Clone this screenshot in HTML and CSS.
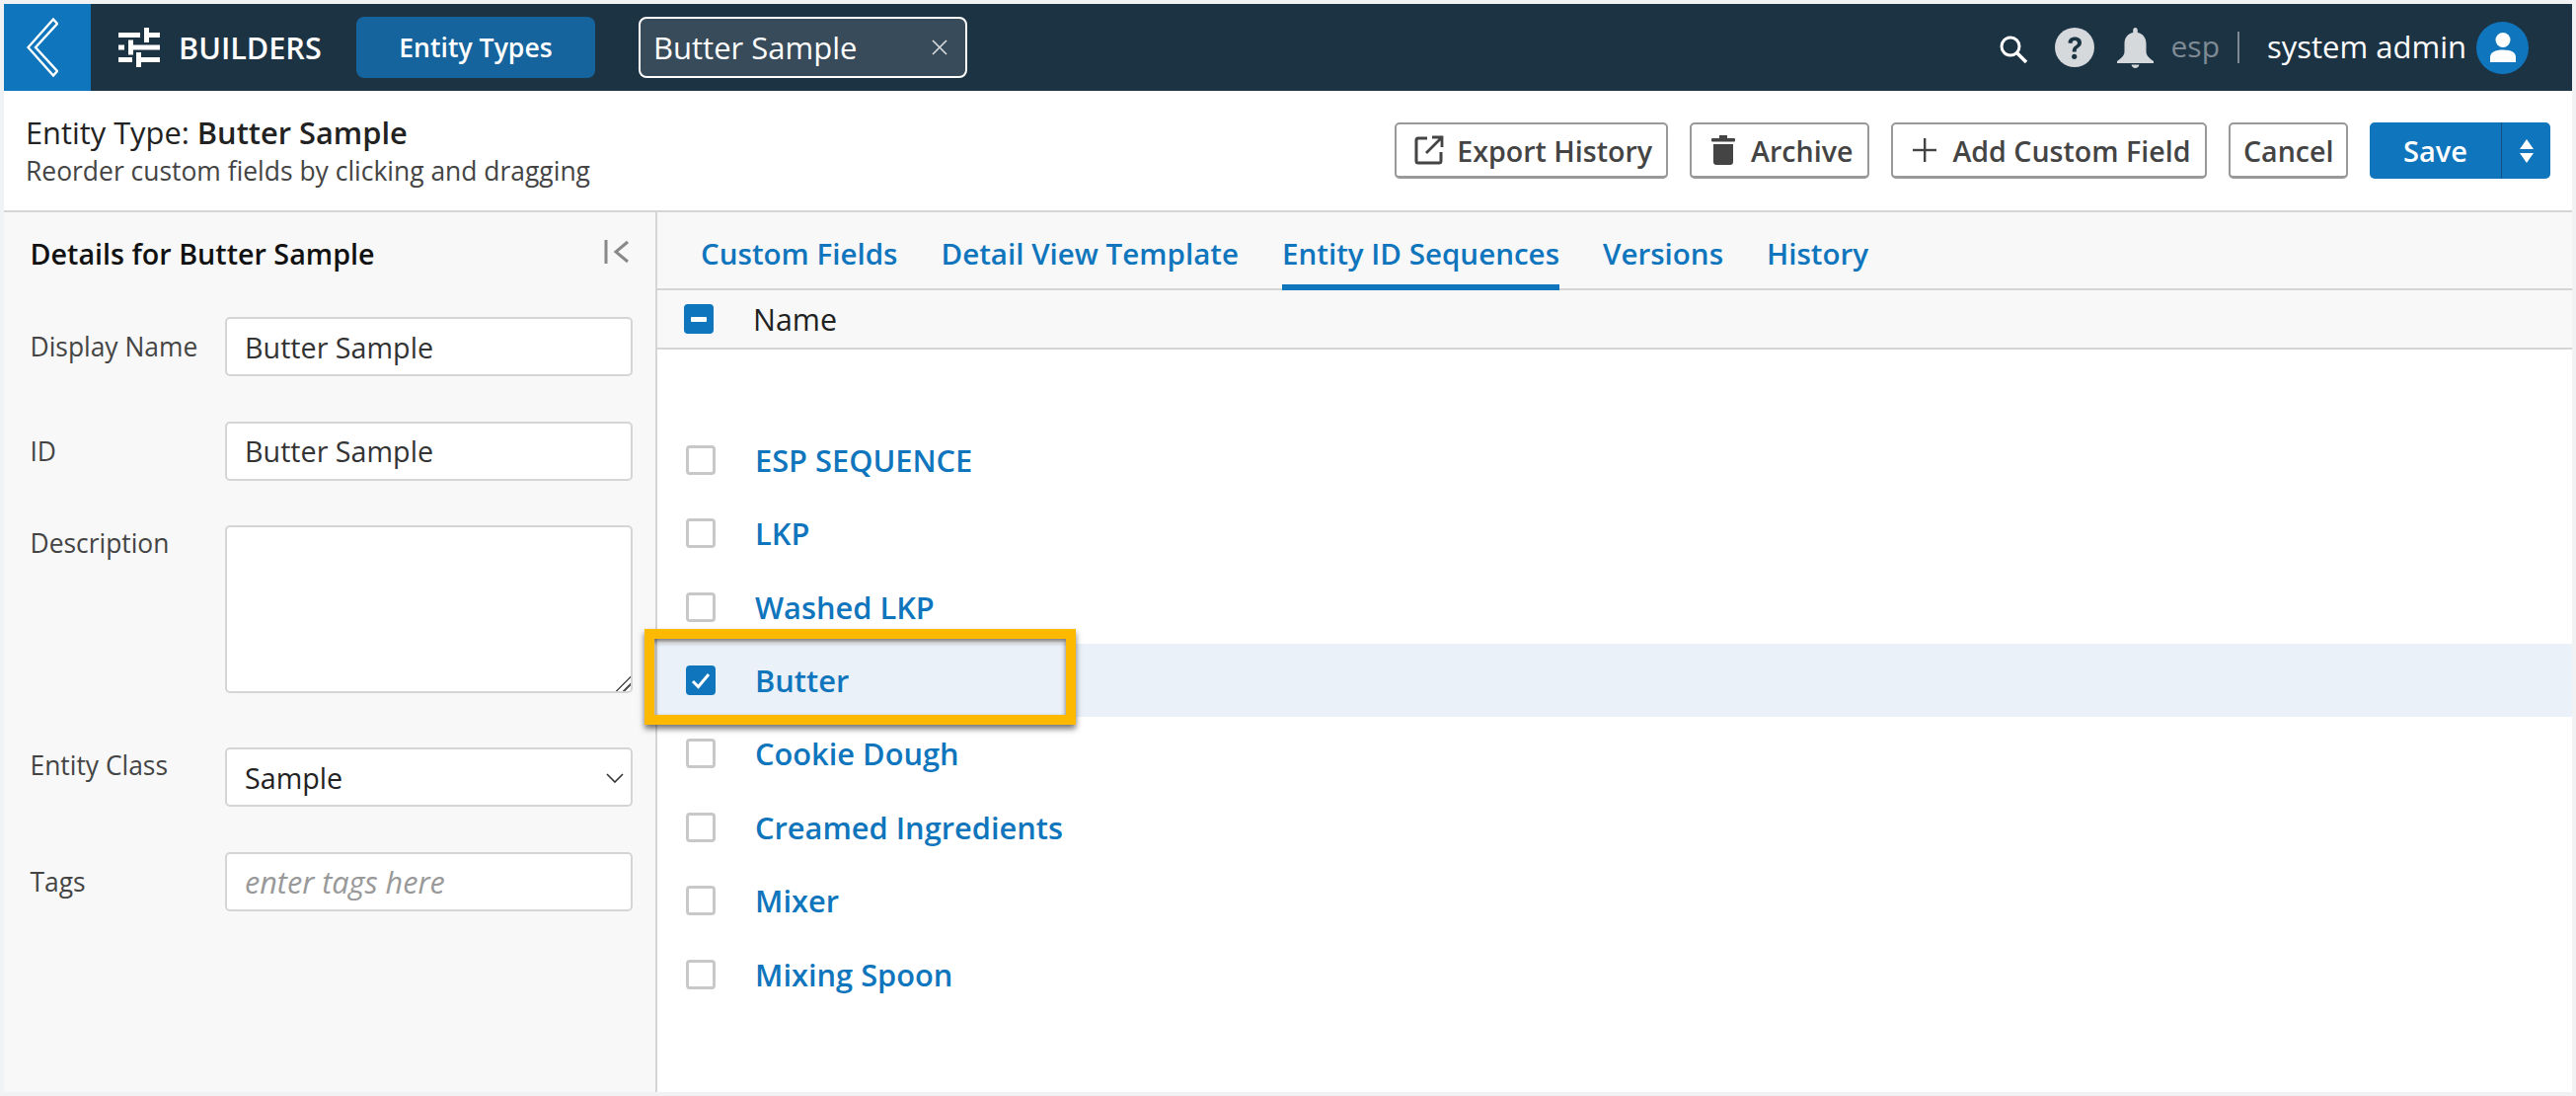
FILE: index.html
```html
<!DOCTYPE html>
<html lang="en">
<head>
<meta charset="utf-8">
<title>Entity Type: Butter Sample</title>
<link rel="stylesheet" href="styles.css">
</head>
<body>
<div class="frame">
  <header class="topbar">
    <a class="back">
      <svg width="32" height="60" viewBox="0 0 32 60" fill="none" stroke="#fff" stroke-width="2.4" stroke-linejoin="miter"><path d="M27 1.5 L31 6 L9 30 L31 54 L27 58.5 L1.5 30 Z"/></svg>
    </a>
    <div class="brand">
      <svg width="42" height="40" viewBox="0 0 42 40" fill="#fff"><rect x="0" y="5" width="22" height="5"/><rect x="26" y="5" width="16" height="5"/><rect x="26" y="0" width="5" height="15"/><rect x="0" y="17.5" width="6" height="5"/><rect x="10" y="17.5" width="32" height="5"/><rect x="10" y="12.5" width="5" height="15"/><rect x="0" y="30" width="14" height="5"/><rect x="18" y="30" width="24" height="5"/><rect x="18" y="25" width="5" height="15"/></svg>
      <span class="brand-name">BUILDERS</span>
    </div>
    <a class="tab-main">Entity Types</a>
    <div class="tab-open"><span>Butter Sample</span>
      <svg width="16" height="16" viewBox="0 0 16 16" stroke="#d5d9dc" stroke-width="1.7" fill="none"><path d="M1 1 L15 15 M15 1 L1 15"/></svg>
    </div>
    <div class="top-right">
      <svg class="i-search" width="30" height="30" viewBox="0 0 30 30" fill="none" stroke="#fff"><circle cx="12" cy="12" r="9" stroke-width="3"/><path d="M18.5 18.5 L28 28" stroke-width="3.6"/></svg>
      <svg class="i-help" width="40" height="40" viewBox="0 0 40 40"><circle cx="20" cy="20" r="20" fill="#d5d9dc"/><path d="M13.5 15.5 C13.5 11.5 16.5 9.5 20.3 9.5 C24.3 9.5 27 11.8 27 15.2 C27 18 25.3 19.2 23.5 20.5 C22 21.6 21.7 22.4 21.7 24.4 L17.7 24.4 C17.7 21.4 18.6 20 20.6 18.6 C22.2 17.5 22.9 16.8 22.9 15.5 C22.9 14 21.8 13.1 20.2 13.1 C18.5 13.1 17.5 14.2 17.4 15.9 Z" fill="#1c3344"/><circle cx="19.7" cy="29.3" r="2.6" fill="#1c3344"/></svg>
      <svg class="i-bell" width="37" height="41" viewBox="0 0 37 41" fill="#d5d9dc"><path d="M18.5 0 C20 0 20.8 1.2 20.8 3 L20.8 5 C26.5 6.2 29.5 10.5 29.5 16.5 L29.5 24 C29.5 28 32 30.5 37 34 L37 36 L0 36 L0 34 C5 30.5 7.5 28 7.5 24 L7.5 16.5 C7.5 10.5 10.5 6.2 16.2 5 L16.2 3 C16.2 1.2 17 0 18.5 0 Z"/><path d="M14.5 37.5 L22.5 37.5 C22 39.8 20.5 41 18.5 41 C16.5 41 15 39.8 14.5 37.5 Z"/></svg>
      <span class="tenant">esp</span>
      <span class="sep"></span>
      <span class="user">system admin</span>
      <span class="avatar"><svg width="28" height="32" viewBox="0 0 28 32" fill="#fff"><circle cx="14" cy="8.5" r="7.5"/><path d="M1 31 L1 26 C1 21 6 18.5 14 18.5 C22 18.5 27 21 27 26 L27 31 Z"/></svg></span>
    </div>
  </header>

  <section class="subheader">
    <div class="heading">
      <h1>Entity Type: <b>Butter Sample</b></h1>
      <p>Reorder custom fields by clicking and dragging</p>
    </div>
    <div class="actions">
      <button class="btn btn-export"><svg width="30" height="30" viewBox="0 0 30 30" fill="none" stroke="#444" stroke-width="3"><path d="M13 3 L4 3 Q2 3 2 5 L2 26 Q2 28 4 28 L25 28 Q27 28 27 26 L27 17"/><path d="M12 18 L27 3 M18 2 L28 2 L28 12" stroke-width="2.8"/></svg>Export History</button>
      <button class="btn"><svg width="24" height="30" viewBox="0 0 24 30" fill="#444"><rect x="0" y="3" width="24" height="3.4" rx="1"/><rect x="8" y="0" width="8" height="3"/><path d="M2 9 L22 9 L22 27 Q22 30 19 30 L5 30 Q2 30 2 27 Z"/></svg>Archive</button>
      <button class="btn"><svg width="24" height="24" viewBox="0 0 24 24" fill="#444"><rect x="11" y="0" width="2.4" height="24"/><rect x="0" y="10.8" width="24" height="2.4"/></svg>Add Custom Field</button>
      <button class="btn btn-plain">Cancel</button>
      <div class="save">
        <button class="save-main">Save</button>
        <button class="save-more"><svg width="14" height="24" viewBox="0 0 14 24" fill="#fff"><path d="M7 0 L14 10 L0 10 Z M0 14 L14 14 L7 24 Z"/></svg></button>
      </div>
    </div>
  </section>

  <main class="content">
    <aside class="sidebar">
      <div class="side-head">
        <h2>Details for Butter Sample</h2>
        <svg width="25" height="24" viewBox="0 0 25 24" fill="none" stroke="#888"><path d="M2 0 L2 24" stroke-width="3"/><path d="M24 2 L12 12 L24 22" stroke-width="3"/></svg>
      </div>
      <form class="fields">
        <div class="field"><label>Display Name</label><input class="ctl" type="text" value="Butter Sample"></div>
        <div class="field"><label>ID</label><input class="ctl" type="text" value="Butter Sample"></div>
        <div class="field field-top"><label>Description</label><textarea class="ctl area"></textarea></div>
        <div class="field field-top field-class"><label>Entity Class</label>
          <div class="select-wrap"><select class="ctl sel"><option>Sample</option></select>
            <svg class="sel-arrow" width="18" height="10" viewBox="0 0 18 10" fill="none" stroke="#333" stroke-width="1.6"><path d="M1 1 L9 9 L17 1"/></svg>
          </div>
        </div>
        <div class="field"><label>Tags</label><input class="ctl tags" type="text" placeholder="enter tags here"></div>
      </form>
    </aside>
    <section class="panel">
      <nav class="tabs">
        <a>Custom Fields</a>
        <a>Detail View Template</a>
        <a class="active">Entity ID Sequences</a>
        <a>Versions</a>
        <a>History</a>
      </nav>
      <div class="list-head">
        <span class="cb cb-on"><svg width="16" height="5" viewBox="0 0 16 5" fill="#fff"><rect width="16" height="5" rx="1"/></svg></span>
        <span class="col-name">Name</span>
      </div>
      <ul class="rows">
        <li class="row"><span class="cb"></span><a>ESP SEQUENCE</a></li>
        <li class="row"><span class="cb"></span><a>LKP</a></li>
        <li class="row"><span class="cb"></span><a>Washed LKP</a></li>
        <li class="row selected"><span class="cb cb-on"><svg width="20" height="17" viewBox="0 0 20 17" fill="none" stroke="#fff" stroke-width="3"><path d="M2 9 L7.5 14.5 L18 2"/></svg></span><a>Butter</a><span class="callout"></span></li>
        <li class="row"><span class="cb"></span><a>Cookie Dough</a></li>
        <li class="row"><span class="cb"></span><a>Creamed Ingredients</a></li>
        <li class="row"><span class="cb"></span><a>Mixer</a></li>
        <li class="row"><span class="cb"></span><a>Mixing Spoon</a></li>
      </ul>
    </section>
  </main>
</div>
</body>
</html>
```

FILE: styles.css
```css
* { box-sizing: border-box; }
html, body { margin: 0; padding: 0; }
body { font-family: "Open Sans", "Noto Sans", sans-serif; color: #333; background: #f0f2f4; }
.frame { width: 2610px; height: 1110px; padding: 4px; display: flex; flex-direction: column; overflow: hidden; background: #f0f2f4; }

.topbar { height: 88px; flex: none; display: flex; align-items: center; background: #1c3344; color: #fff; }
.back { width: 88px; height: 88px; flex: none; display: flex; align-items: center; justify-content: center; background: #0f75bc; padding-right: 10px; }
.brand { display: flex; align-items: center; margin-left: 28px; width: 241px; gap: 19px; }
.brand-name { font-size: 30.6px; font-weight: 600; }
.tab-main { width: 242px; height: 62px; display: flex; align-items: center; justify-content: center; background: #15649d; border-radius: 8px; font-size: 26.6px; font-weight: 600; }
.tab-open { width: 333px; height: 62px; margin-left: 44px; padding: 0 18px 0 13px; display: flex; align-items: center; justify-content: space-between; background: #384b5a; border: 2.5px solid #fff; border-radius: 8px; font-size: 31px; }
.top-right { margin-left: auto; display: flex; align-items: center; padding-right: 44px; }
.i-search { margin-top: 4px; }
.i-help { margin-left: 27px; }
.i-bell { margin-left: 23px; }
.tenant { margin-left: 17px; font-size: 30px; color: #7d8a93; margin-top: -3px; }
.sep { width: 2px; height: 32px; margin-left: 18px; background: #7d8a93; }
.user { margin-left: 28px; font-size: 31px; margin-top: -3px; }
.avatar { width: 53px; height: 53px; margin-left: 10px; border-radius: 50%; background: #0f75bc; display: flex; align-items: center; justify-content: center; }

.subheader { height: 123px; flex: none; display: flex; align-items: center; justify-content: space-between; padding: 0 22px 0 22px; background: #fff; border-bottom: 2px solid #d5d5d5; }
.heading h1 { margin: 0; font-size: 30.8px; line-height: 41px; font-weight: 400; color: #222; }
.heading h1 b { font-weight: 600; }
.heading p { margin: 0; font-size: 26.45px; line-height: 36px; color: #444; }
.actions { display: flex; align-items: center; gap: 22px; }
.btn { height: 57px; padding: 0 15px 0 20px; display: flex; align-items: center; gap: 16px; background: #fff; border: 2px solid #999; border-bottom-width: 3px; border-radius: 5px; font: 600 28.6px "Open Sans", sans-serif; color: #444; }
.btn-export { padding: 0 14px 0 18px; gap: 13px; }
.btn-plain { padding: 0 12.5px; }
.save { display: flex; height: 57px; border-radius: 5px; overflow: hidden; }
.save button { border: 0; background: #0f75bc; color: #fff; font: 600 29px "Open Sans", sans-serif; }
.save-main { width: 133px; }
.save-more { width: 50px; border-left: 1px solid #15507f !important; display: flex; align-items: center; justify-content: center; }

.content { flex: 1; display: flex; min-height: 0; background: #fff; }
.sidebar { width: 662px; flex: none; background: #f8f8f8; border-right: 2px solid #d5d5d5; padding: 0 23px 0 26.5px; }
.side-head { height: 106px; display: flex; justify-content: space-between; padding-top: 23px; padding-right: 4px; }
.side-head svg { margin-top: 5px; }
.side-head h2 { margin: 0; font-size: 28.7px; line-height: 38px; font-weight: 600; color: #111; }
.fields { display: flex; flex-direction: column; gap: 45.5px; }
.field { display: flex; align-items: center; }
.field-top { align-items: flex-start; }
.field-class { margin-top: 9.5px; }
.field label { width: 197.5px; flex: none; font-size: 26.4px; line-height: 36px; color: #444; }
.ctl { width: 413px; height: 60px; padding: 0 18px; background: #fff; border: 2.5px solid #d5d5d5; border-radius: 5px; font: 400 28.7px "Open Sans", sans-serif; color: #333; outline: 0; display: block; }
.area { height: 170px; padding-top: 10px; }
.area::-webkit-resizer { background: linear-gradient(135deg, transparent 48%, #555 48%, #555 56%, transparent 56%, transparent 72%, #555 72%, #555 80%, transparent 80%); }
.select-wrap { position: relative; }
.sel { appearance: none; -webkit-appearance: none; padding-left: 18px; color: #222; }
.sel-arrow { position: absolute; right: 9px; top: 26px; }
.tags { font-size: 30.6px; }
.tags::placeholder { font-style: italic; color: #999; opacity: 1; }

.panel { flex: 1; min-width: 0; display: flex; flex-direction: column; background: #fff; }
.tabs { height: 79px; flex: none; display: flex; gap: 44px; padding: 0 0 0 44px; background: #f8f8f8; border-bottom: 2px solid #d5d5d5; }
.tabs a { height: 79px; padding-top: 22px; font-size: 29.55px; line-height: 40px; font-weight: 600; color: #0f75bc; }
.tabs .active { border-bottom: 6px solid #0f75bc; }
.list-head { height: 60px; flex: none; display: flex; align-items: center; padding-left: 27px; background: #f8f8f8; border-bottom: 2px solid #d5d5d5; }
.col-name { margin-left: 40px; font-size: 30.4px; color: #222; }
.cb { width: 30px; height: 30px; flex: none; display: flex; align-items: center; justify-content: center; background: #fff; border: 3px solid #c8c8c8; border-radius: 4px; }
.cb-on { background: #0f75bc; border-color: #0f75bc; }
.rows { list-style: none; margin: 0; padding: 74.5px 0 0; }
.row { position: relative; height: 74.45px; display: flex; align-items: center; padding-left: 29px; }
.row a { margin-left: 40px; font-size: 30.8px; font-weight: 600; color: #0f75bc; }
.selected { background: #eaf1f9; }
.callout { position: absolute; left: -13px; top: -14.5px; width: 437px; height: 97px; border: 10px solid #fdb900; box-shadow: 0 4px 6px rgba(0,0,0,.55), inset 0 3px 5px rgba(0,0,0,.55); }
```
